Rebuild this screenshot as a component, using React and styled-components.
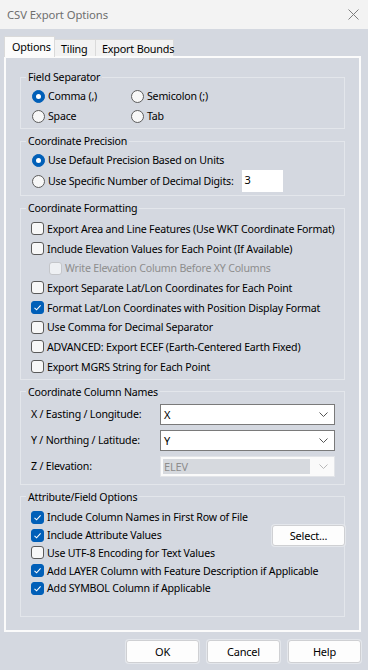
import React from 'react';
import styled, { createGlobalStyle } from 'styled-components';

const FONT = `"Noto Sans", "Segoe UI", sans-serif`;
const BG = '#d4d8e0';

const Global = createGlobalStyle`
  html, body { margin: 0; padding: 0; background: ${BG}; }
  body { font-family: ${FONT}; font-size: 10.6px; letter-spacing: -0.2px; color: #000; }
  * { box-sizing: border-box; }
`;

const Window = styled.div`
  width: 368px;
  height: 670px;
  background: ${BG};
  display: flex;
  flex-direction: column;
  overflow: hidden;
`;

const TitleBar = styled.div`
  height: 29px;
  flex-shrink: 0;
  background: #f3f3f3;
  display: flex;
  align-items: center;
  justify-content: space-between;
  padding: 0 9px 0 7px;
`;

const TitleText = styled.span`
  font-size: 11.3px;
  letter-spacing: -0.1px;
  color: #6f6f6f;
`;

const Body = styled.div`
  padding: 7px 7px 0 4px;
  display: flex;
  flex-direction: column;
`;

const TabStrip = styled.div`
  display: flex;
  align-items: flex-end;
  height: 20px;
  position: relative;
  z-index: 1;
`;

const Tab = styled.div`
  width: ${p => p.$w}px;
  height: ${p => (p.$active ? 21 : 17)}px;
  margin-bottom: ${p => (p.$active ? -1 : 0)}px;
  margin-left: ${p => (p.$first ? 0 : -1)}px;
  background: ${p => (p.$active ? '#fbfbfb' : '#f2f2f2')};
  border: 1px solid #dadada;
  border-bottom: none;
  padding-left: ${p => (p.$active ? 7 : 6)}px;
  padding-bottom: ${p => (p.$active ? 2 : 0)}px;
  display: flex;
  align-items: center;
  white-space: nowrap;
  font-size: 10.8px;
`;

const TabPage = styled.div`
  border: 2px solid #fbfbfb;
  padding: 11px 14px 13px 14px;
  display: flex;
  flex-direction: column;
  gap: 4px;
`;

const Group = styled.fieldset`
  margin: 0;
  min-width: 0;
  border: 1px solid #e3e6eb;
  padding: ${p => p.$pad};
`;

const GroupTitle = styled.legend`
  margin-left: ${p => p.$ml || -6}px;
  padding: 0 2px;
  line-height: 16px;
  height: 16px;
`;

const RadioGrid = styled.div`
  display: grid;
  grid-template-columns: 99px 1fr;
  grid-auto-rows: 20px;
`;

const OptionRow = styled.label`
  display: flex;
  align-items: center;
  gap: 3px;
  height: ${p => p.$h || 20}px;
  padding-left: ${p => p.$indent || 0}px;
  color: ${p => (p.$disabled ? '#8d8d8d' : '#000')};
  white-space: nowrap;
`;

const RadioCircle = styled.span`
  width: 13px;
  height: 13px;
  flex-shrink: 0;
  border-radius: 50%;
  border: 1px solid ${p => (p.$on ? '#005fb8' : '#5c5c5c')};
  background: ${p => (p.$on ? '#005fb8' : '#f7f7f7')};
  display: flex;
  align-items: center;
  justify-content: center;
  &::after {
    content: '';
    display: ${p => (p.$on ? 'block' : 'none')};
    width: 5px;
    height: 5px;
    border-radius: 50%;
    background: #fff;
  }
`;

const Box = styled.span`
  width: 13px;
  height: 13px;
  flex-shrink: 0;
  border-radius: 3px;
  border: 1px solid ${p => (p.$on ? '#005fb8' : p.$disabled ? '#c4c6ca' : '#5a5a5a')};
  background: ${p => (p.$on ? '#005fb8' : p.$disabled ? '#eef0f3' : '#f7f7f7')};
  display: flex;
  align-items: center;
  justify-content: center;
`;

const DigitsInput = styled.div`
  width: 41px;
  height: 22px;
  margin-left: 5px;
  background: #fff;
  padding: 2px 3px;
  line-height: 16px;
  font-size: 11px;
`;

const CheckList = styled.div`
  display: flex;
  flex-direction: column;
`;

const ColumnGrid = styled.div`
  display: grid;
  grid-template-columns: 129px 175px;
  row-gap: 5px;
  align-items: center;
`;

const Combo = styled.div`
  height: 21px;
  border: 1px solid ${p => (p.$disabled ? '#e2e4e8' : '#7a7a7a')};
  background: ${p => (p.$disabled ? '#fafafa' : '#fff')};
  display: flex;
  align-items: center;
  padding: 2px 6px 2px 2px;
  gap: 4px;
`;

const ComboValue = styled.span`
  flex: 1;
  height: 100%;
  display: flex;
  align-items: center;
  padding-left: 1px;
  font-size: 11px;
  background: ${p => (p.$disabled ? '#d6d9de' : 'transparent')};
  color: ${p => (p.$disabled ? '#8d8d8d' : '#000')};
  margin-right: ${p => (p.$disabled ? 5 : 0)}px;
`;

const AttrGrid = styled.div`
  display: grid;
  grid-template-columns: minmax(0, 1fr) 73px;
  grid-auto-rows: 17.75px;
  align-items: center;
`;

const AttrCell = styled.div`
  grid-column: 1;
  min-width: 0;
`;

const Button = styled.div`
  width: 73px;
  height: ${p => p.$h || 23}px;
  background: #fdfdfd;
  border: 1px solid #cfd0d3;
  border-radius: 3px;
  box-shadow: 0 0 0 1px #e4e7ec;
  display: flex;
  align-items: center;
  justify-content: center;
  font-size: 11px;
`;

const SelectButton = styled(Button)`
  justify-self: end;
  margin-right: -1px;
  grid-column: 2;
  grid-row: 2;
`;

const ButtonRow = styled.div`
  display: flex;
  justify-content: flex-end;
  gap: 8px;
  margin-top: 8px;
`;

const Chevron = ({ color }) => (
  <svg width="9" height="5" viewBox="0 0 9 5" style={{ flexShrink: 0 }}>
    <polyline points="0.5,0.5 4.5,4.5 8.5,0.5" fill="none" stroke={color} strokeWidth="1" />
  </svg>
);

const CloseIcon = () => (
  <svg width="11" height="11" viewBox="0 0 11 11">
    <path d="M0.5 0.5 L10.5 10.5 M10.5 0.5 L0.5 10.5" stroke="#7d7d7d" strokeWidth="1" fill="none" />
  </svg>
);

const Radio = ({ on, children }) => (
  <OptionRow>
    <RadioCircle $on={on} />
    <span>{children}</span>
  </OptionRow>
);

const Check = ({ on, disabled, indent, h, children }) => (
  <OptionRow $disabled={disabled} $indent={indent} $h={h}>
    <Box $on={on} $disabled={disabled}>
      {on && (
        <svg width="9" height="9" viewBox="0 0 9 9">
          <polyline points="1.5,4.8 3.6,6.8 7.6,2.4" fill="none" stroke="#fff" strokeWidth="1.1" />
        </svg>
      )}
    </Box>
    <span>{children}</span>
  </OptionRow>
);

const ComboRow = ({ label, value, disabled }) => (
  <>
    <span>{label}</span>
    <Combo $disabled={disabled}>
      <ComboValue $disabled={disabled}>{value}</ComboValue>
      <Chevron color={disabled ? '#b8b8b8' : '#555'} />
    </Combo>
  </>
);

const formatting = [
  { t: 'Export Area and Line Features (Use WKT Coordinate Format)' },
  { t: 'Include Elevation Values for Each Point (If Available)' },
  { t: 'Write Elevation Column Before XY Columns', disabled: true, indent: 18 },
  { t: 'Export Separate Lat/Lon Coordinates for Each Point' },
  { t: 'Format Lat/Lon Coordinates with Position Display Format', on: true },
  { t: 'Use Comma for Decimal Separator' },
  { t: 'ADVANCED: Export ECEF (Earth-Centered Earth Fixed)' },
  { t: 'Export MGRS String for Each Point' },
];

const attrs = [
  { t: 'Include Column Names in First Row of File', on: true },
  { t: 'Include Attribute Values', on: true },
  { t: 'Use UTF-8 Encoding for Text Values' },
  { t: 'Add LAYER Column with Feature Description if Applicable', on: true },
  { t: 'Add SYMBOL Column if Applicable', on: true },
];

export default function App() {
  return (
    <Window>
      <Global />
      <TitleBar>
        <TitleText>CSV Export Options</TitleText>
        <CloseIcon />
      </TitleBar>
      <Body>
        <TabStrip>
          <Tab $active $first $w={51}>Options</Tab>
          <Tab $w={42}>Tiling</Tab>
          <Tab $w={79}>Export Bounds</Tab>
        </TabStrip>
        <TabPage>
          <Group $pad="1px 10px 2px 11px">
            <GroupTitle>Field Separator</GroupTitle>
            <RadioGrid>
              <Radio on>Comma (,)</Radio>
              <Radio>Semicolon (;)</Radio>
              <Radio>Space</Radio>
              <Radio>Tab</Radio>
            </RadioGrid>
          </Group>

          <Group $pad="1px 10px 3px 11px">
            <GroupTitle>Coordinate Precision</GroupTitle>
            <Radio on>Use Default Precision Based on Units</Radio>
            <OptionRow $h={22}>
              <RadioCircle />
              <span>Use Specific Number of Decimal Digits:</span>
              <DigitsInput>3</DigitsInput>
            </OptionRow>
          </Group>

          <Group $pad="3px 10px 2px 10px">
            <GroupTitle $ml={-5}>Coordinate Formatting</GroupTitle>
            <CheckList>
              {formatting.map(f => (
                <Check key={f.t} on={f.on} disabled={f.disabled} indent={f.indent} h={19.7}>
                  {f.t}
                </Check>
              ))}
            </CheckList>
          </Group>

          <Group $pad="4px 9px 7px 10px">
            <GroupTitle $ml={-5}>Coordinate Column Names</GroupTitle>
            <ColumnGrid>
              <ComboRow label="X / Easting / Longitude:" value="X" />
              <ComboRow label="Y / Northing / Latitude:" value="Y" />
              <ComboRow label="Z / Elevation:" value="ELEV" disabled />
            </ColumnGrid>
          </Group>

          <Group $pad="4px 0 19px 10px">
            <GroupTitle $ml={-5}>Attribute/Field Options</GroupTitle>
            <AttrGrid>
              {attrs.map((a, i) => (
                <AttrCell key={a.t} style={{ gridRow: i + 1 }}>
                  <Check on={a.on} h={17.75}>{a.t}</Check>
                </AttrCell>
              ))}
              <SelectButton $h={21}>Select...</SelectButton>
            </AttrGrid>
          </Group>
        </TabPage>
        <ButtonRow>
          <Button>OK</Button>
          <Button>Cancel</Button>
          <Button>Help</Button>
        </ButtonRow>
      </Body>
    </Window>
  );
}
